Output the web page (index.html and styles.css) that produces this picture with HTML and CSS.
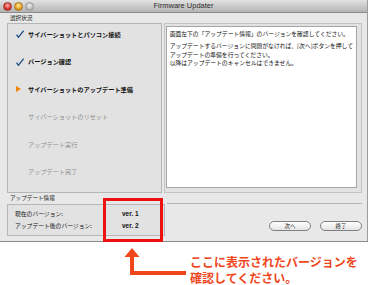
FILE: index.html
```html
<!DOCTYPE html>
<html lang="ja">
<head>
    <meta charset="UTF-8">
    <meta name="viewport" content="width=device-width, initial-scale=1.0">
    <title>Firmware Updater</title>
    <link rel="stylesheet" href="styles.css">
</head>
<body>

    <div class="window">
        <div class="titlebar">
            <div class="lights">
                <span class="light red"></span>
                <span class="light yellow"></span>
                <span class="light gray"></span>
            </div>
            <div class="title">Firmware Updater</div>
            <div></div>
        </div>

        <div class="content">
            <div class="group-label">選択状況</div>

            <div class="main">
                <div class="steps">
                    <div class="step done">
                        <span class="mark">
                            <svg width="8" height="8" viewBox="0 0 8 8"><path d="M0.6 4.6 L2.4 7.3 L7.6 0.6" fill="none" stroke="#1d4f82" stroke-width="1.3"/></svg>
                        </span>
                        サイバーショットとパソコン接続
                    </div>
                    <div class="step done">
                        <span class="mark">
                            <svg width="8" height="8" viewBox="0 0 8 8"><path d="M0.6 4.6 L2.4 7.3 L7.6 0.6" fill="none" stroke="#1d4f82" stroke-width="1.3"/></svg>
                        </span>
                        バージョン確認
                    </div>
                    <div class="step current">
                        <span class="mark">
                            <svg width="5" height="6" viewBox="0 0 5 6"><polygon points="0,0 5,3 0,6" fill="#f0880c"/></svg>
                        </span>
                        サイバーショットのアップデート準備
                    </div>
                    <div class="step todo"><span class="mark"></span>サイバーショットのリセット</div>
                    <div class="step todo"><span class="mark"></span>アップデート実行</div>
                    <div class="step todo"><span class="mark"></span>アップデート完了</div>
                </div>

                <div class="textbox-outer">
                    <div class="textbox">
                        <p>画面左下の「アップデート情報」のバージョンを確認してください。</p>
                        <p>アップデートするバージョンに問題がなければ、[次へ]ボタンを押して<br>アップデートの準備を行ってください。<br>以降はアップデートのキャンセルはできません。</p>
                    </div>
                </div>
            </div>

            <div class="bottom">
                <div class="info-col">
                    <div class="group-label">アップデート情報</div>
                    <div class="info">
                        <div class="info-row"><span class="info-name">現在のバージョン:</span><span class="info-value">ver. 1</span></div>
                        <div class="info-row"><span class="info-name">アップデート後のバージョン:</span><span class="info-value">ver. 2</span></div>
                    </div>
                </div>
                <div class="buttons">
                    <button class="pill">次へ</button>
                    <button class="pill">終了</button>
                </div>
            </div>
        </div>

        <div class="highlight"></div>
    </div>

    <div class="note">
        <svg class="arrow" width="62" height="28" viewBox="0 0 62 28">
            <polygon points="0.5,9 8,0 15.5,9" fill="#f0461c"/>
            <rect x="6" y="8" width="4" height="19" fill="#f0461c"/>
            <rect x="6" y="23" width="56" height="4" fill="#f0461c"/>
        </svg>
        <div class="note-text">ここに表示されたバージョンを<br>確認してください。</div>
    </div>

</body>
</html>
```

FILE: styles.css
```css
body {
    margin: 0;
    padding: 0;
    background: #fff;
    font-family: "Noto Sans CJK JP", "Liberation Sans", sans-serif;
    color: #111;
}

.window {
    position: relative;
    width: 367px;
    height: 241px;
    background: #e8e8e8;
    border-right: 1px solid #9c9c9c;
    border-bottom: 1px solid #8c8c8c;
    display: flex;
    flex-direction: column;
}

.titlebar {
    height: 12px;
    display: grid;
    grid-template-columns: 1fr auto 1fr;
    align-items: center;
    background: linear-gradient(#e2e2e2, #b4b4b4);
    border-bottom: 1px solid #8a8a8a;
}

.lights {
    display: flex;
    gap: 2px;
    padding-left: 3px;
}

.light {
    width: 9px;
    height: 9px;
    border-radius: 50%;
    box-sizing: border-box;
}

.light.red {
    background: radial-gradient(circle at 50% 35%, #ffb0a8, #d8342c 60%, #9a1a14);
    border: 1px solid #a0302a;
}

.light.yellow {
    background: radial-gradient(circle at 50% 35%, #ffe9a0, #e8a020 60%, #a86a10);
    border: 1px solid #a87418;
}

.light.gray {
    background: radial-gradient(circle at 50% 35%, #f0f0f0, #bdbdbd 60%, #909090);
    border: 1px solid #999;
}

.title {
    font-family: "Liberation Sans", sans-serif;
    font-size: 7.5px;
    color: #2a2a2a;
    line-height: 12px;
}

.content {
    padding: 0 5px 0 7px;
    display: flex;
    flex-direction: column;
}

.group-label {
    font-size: 5.6px;
    line-height: 10px;
    padding-left: 3px;
    color: #222;
}

.main {
    display: flex;
    gap: 2px;
    height: 170px;
}

.steps {
    width: 158px;
    box-sizing: border-box;
    background: #e2e2e2;
    border: 1px solid #b6b6b6;
    padding: 5px 0 0 8px;
    display: flex;
    flex-direction: column;
    gap: 17.6px;
}

.step {
    display: flex;
    align-items: center;
    height: 10px;
    font-size: 6.2px;
    font-weight: bold;
    white-space: nowrap;
}

.step.todo {
    font-weight: normal;
    color: #8f8f8f;
}

.mark {
    width: 12px;
    display: flex;
    align-items: center;
}

.textbox-outer {
    flex: 1;
    box-sizing: border-box;
    border: 1px solid #c4c4c4;
    background: #e2e2e2;
    padding: 2px 4px 4px 1px;
    display: flex;
}

.textbox {
    flex: 1;
    background: #fff;
    border: 1px solid #a6a6a6;
    padding: 3px 3px;
    font-size: 5.8px;
    line-height: 8.5px;
    white-space: nowrap;
}

.textbox p {
    margin: 0 0 3.5px 0;
}

.bottom {
    display: flex;
    gap: 2px;
}

.info-col {
    width: 158px;
    display: flex;
    flex-direction: column;
}

.info-col .group-label {
    line-height: 11px;
}

.info {
    height: 32px;
    box-sizing: border-box;
    background: #e2e2e2;
    border: 1px solid #b6b6b6;
    padding: 3px 0 0 7px;
    font-size: 5.8px;
    line-height: 12px;
}

.info-row {
    display: flex;
}

.info-name {
    width: 107px;
}

.info-value {
    font-family: "Liberation Sans", sans-serif;
    font-size: 6.5px;
    font-weight: bold;
}

.buttons {
    flex: 1;
    margin-top: 10px;
    border-top: 1px solid #b4b4b4;
    display: flex;
    justify-content: flex-end;
    align-items: flex-start;
    gap: 9px;
    padding-top: 17px;
}

.pill {
    width: 42px;
    height: 10px;
    padding: 0;
    border: 1px solid #808080;
    border-radius: 5px;
    background: linear-gradient(#ffffff, #e4e4e4);
    font-family: "Noto Sans CJK JP", sans-serif;
    font-size: 5.5px;
    line-height: 8px;
    color: #222;
}

.highlight {
    position: absolute;
    left: 103px;
    top: 198px;
    width: 60px;
    height: 44px;
    box-sizing: border-box;
    border: 3px solid #ee1111;
}

.note {
    display: flex;
    align-items: flex-start;
    padding-left: 124px;
    gap: 4px;
}

.arrow {
    margin-top: 6px;
}

.note-text {
    margin-top: 12px;
    font-size: 12px;
    line-height: 16px;
    font-weight: bold;
    color: #f0461c;
    white-space: nowrap;
}
```
